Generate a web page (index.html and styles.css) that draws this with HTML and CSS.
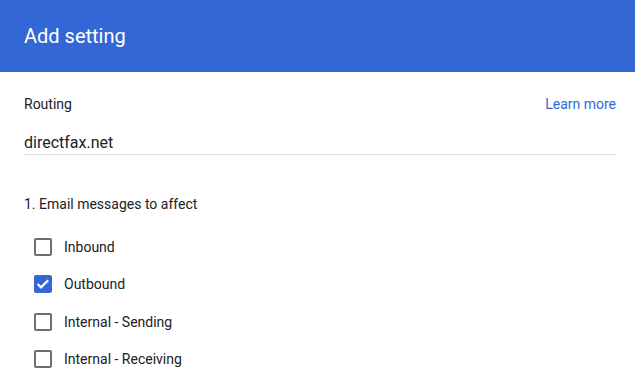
FILE: index.html
```html
<!DOCTYPE html>
<html lang="en">
<head>
    <meta charset="UTF-8">
    <meta name="viewport" content="width=device-width, initial-scale=1.0">
    <title>Add setting</title>
    <link rel="stylesheet" href="styles.css">
</head>
<body>
    <div class="header">
        <h1>Add setting</h1>
    </div>
    <div class="content">
        <div class="label-row">
            <span class="label">Routing</span>
            <a class="learn-more" href="#">Learn more</a>
        </div>
        <div class="field">directfax.net</div>

        <div class="section-title">1. Email messages to affect</div>
        <div class="options">
            <label class="option"><span class="box"></span>Inbound</label>
            <label class="option"><span class="box checked">
                <svg viewBox="0 0 18 18" width="18" height="18"><path d="M3.6 9l3.4 3.4 7.2-7.2" fill="none" stroke="#fff" stroke-width="2.2"/></svg>
            </span>Outbound</label>
            <label class="option"><span class="box"></span>Internal - Sending</label>
            <label class="option"><span class="box"></span>Internal - Receiving</label>
        </div>
    </div>
</body>
</html>
```

FILE: styles.css
```css
body {
    font-family: Roboto, "Liberation Sans", sans-serif;
    margin: 0;
    padding: 0;
    background-color: #fff;
    color: #202124;
}

.header {
    background-color: #3367d6;
    height: 72px;
    padding: 0 24px;
    display: flex;
    align-items: center;
}

.header h1 {
    margin: 0;
    font-size: 20px;
    font-weight: 400;
    color: #fff;
}

.content {
    padding: 22px 19px 0 24px;
}

.label-row {
    display: flex;
    justify-content: space-between;
    align-items: center;
    font-size: 14px;
    line-height: 20px;
}

.learn-more {
    color: #3367d6;
    text-decoration: none;
}

.field {
    margin-top: 18px;
    font-size: 16px;
    line-height: 22px;
    border-bottom: 1px solid #e0e0e0;
}

.section-title {
    margin-top: 39px;
    font-size: 14px;
    line-height: 20px;
}

.options {
    margin-top: 14px;
    padding-left: 10px;
}

.option {
    display: flex;
    align-items: center;
    gap: 12px;
    height: 37.5px;
    font-size: 14px;
}

.box {
    width: 18px;
    height: 18px;
    box-sizing: border-box;
    border: 2px solid #6f6f6f;
    border-radius: 2px;
    display: flex;
    align-items: center;
    justify-content: center;
}

.box.checked {
    background-color: #3367d6;
    border-color: #3367d6;
}

.box svg {
    flex: none;
}
```
